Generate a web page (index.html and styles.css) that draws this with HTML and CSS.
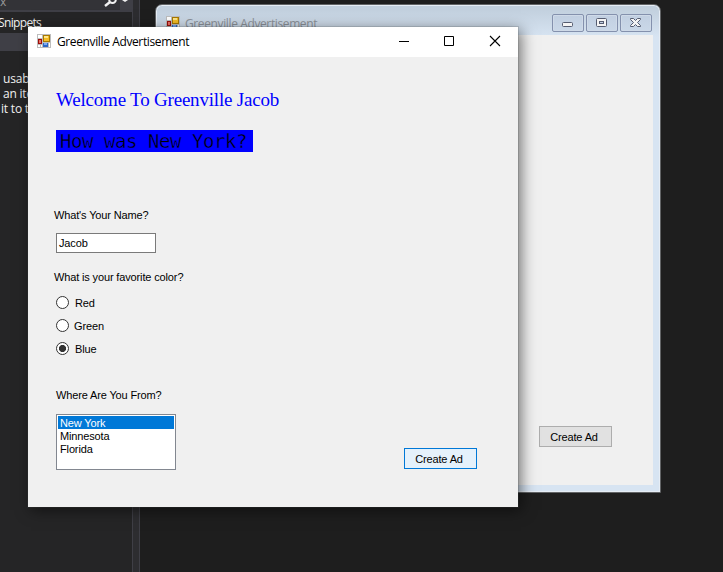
FILE: index.html
```
<!DOCTYPE html>
<html lang="en">
<head>
<meta charset="utf-8">
<title>Greenville Advertisement</title>
<link rel="stylesheet" href="styles.css">
</head>
<body>
<svg class="defs" width="0" height="0">
  <defs>
    <symbol id="form" viewBox="0 0 14 14">
      <path fill="#bdbdbd" d="M0 0h14v14H0z"/>
      <path fill="#fff" d="M1 1h4v3H1zM1 11h2v2H1zM4 11h1v2H4zM12 9h1v4h-1z"/>
      <path fill="#a87900" d="M6 1h7v7H6z"/>
      <path fill="#f5bd25" d="M7 2h5v5H7z"/>
      <path fill="#ffe68a" d="M7 2h4v2H7z"/>
      <path fill="#9c0f0b" d="M1 5h4v5H1z"/>
      <path fill="#ec7064" d="M2 6h2v3H2z"/>
      <path fill="#2e66c4" d="M6 9h5v4H6z"/>
      <path fill="#78aaf2" d="M7 9h3v2H7z"/>
    </symbol>
  </defs>
</svg>
<main class="desktop">
  <aside class="toolbox">
    <div class="search"><span class="query">x</span>
      <svg class="lens" width="24" height="10" viewBox="0 0 24 10"><path d="M1 6L6 2" stroke="#f1f1f1" stroke-width="2.5"/><circle cx="8.500" cy="-.2" r="3.300" fill="none" stroke="#f1f1f1" stroke-width="2"/><path d="M18 0h6l-3 2z" fill="#f1f1f1"/></svg>
    </div>
    <div class="group">Snippets</div>
    <div class="selected"></div>
    <div class="hint"><p>usab</p><p>an ite</p><p class="last">it to t</p></div>
  </aside>
  <div class="splitter"></div>

  <section class="window back">
    <header class="bar">
      <svg class="app" width="14" height="14"><use href="#form"/></svg>
      <h2 class="title">Greenville Advertisement</h2>
      <div class="caption">
        <span class="cap"><svg width="30" height="16" viewBox="0 0 30 16"><rect x="9.500" y="7.500" width="10" height="4" rx="1" fill="#f4f4f4" stroke="#555c70"/></svg></span>
        <span class="cap"><svg width="30" height="16" viewBox="0 0 30 16"><rect x="9.500" y="3.500" width="10" height="8" rx="1" fill="#f4f4f4" stroke="#555c70"/><rect x="12.500" y="6.500" width="4" height="2" fill="#c3d0e2" stroke="#555c70"/></svg></span>
        <span class="cap"><svg width="30" height="16" viewBox="0 0 30 16"><path d="M9.500 3.500h3l2 2 2-2h3v1l-3 3 3 3v1h-3l-2-2-2 2h-3v-1l3-3-3-3z" fill="#f4f4f4" stroke="#555c70"/></svg></span>
      </div>
    </header>
    <div class="client"><button class="create">Create Ad</button></div>
  </section>

  <section class="window front">
    <header class="bar">
      <svg class="app" width="14" height="14"><use href="#form"/></svg>
      <h1 class="title">Greenville Advertisement</h1>
      <svg class="controls" width="102" height="12" viewBox="0 0 102 12" fill="none" stroke="#000"><path d="M0 6.500h10M45.500 1.500h9v9h-9z"/><path d="M91 1l10 10M101 1L91 11" stroke-width="1.100"/></svg>
    </header>
    <form class="client">
      <p class="welcome">Welcome To Greenville Jacob</p>
      <p class="question"><span>How was New York?</span></p>
      <label class="label name">What's Your Name?</label>
      <div class="field">Jacob</div>
      <label class="label color">What is your favorite color?</label>
      <div class="radios">
        <label class="option"><i class="dot"></i><span>Red</span></label>
        <label class="option"><i class="dot"></i><span class="green">Green</span></label>
        <label class="option"><i class="dot on"></i><span>Blue</span></label>
      </div>
      <label class="label from">Where Are You From?</label>
      <div class="bottom">
        <ul class="list"><li class="picked">New York</li><li>Minnesota</li><li>Florida</li></ul>
        <button type="button" class="create focus">Create Ad</button>
      </div>
    </form>
  </section>
</main>
</body>
</html>
```
FILE: styles.css
```
* { box-sizing: border-box; }
body { margin: 0; font: 11px/13px "Liberation Sans", Arial, sans-serif; letter-spacing: -.14px; color: #000; }
p, h1, h2, ul { margin: 0; padding: 0; }
.defs { position: absolute; }
svg { display: block; flex: none; }
.desktop { position: relative; display: flex; width: 723px; height: 572px; overflow: hidden; background: #1e1e1e; }
.toolbox { width: 132px; height: 572px; background: #252526; color: #f1f1f1; font: 12px/15px "Open Sans", "Noto Sans", sans-serif; overflow: hidden; white-space: nowrap; }
.search { display: flex; height: 12px; background: linear-gradient(90deg, #333337 120px, #3f3f46 120px); border-bottom: 2px solid #3f3f46; margin-bottom: 3px; }
.query { flex: none; width: 104px; margin-top: -6px; color: #999; }
.lens { overflow: visible; }
.group { margin-left: -2px; height: 18px; letter-spacing: -.65px; }
.selected { height: 18px; background: #3f3f46; margin-bottom: 20px; }
.hint { padding-left: 3px; letter-spacing: -.2px; }
.last { margin-left: -2px; }
.splitter { width: 8px; border: 1px solid #3f3f46; border-width: 0 1px; background: #2d2d30; }

.window { position: absolute; }
.bar { display: flex; align-items: center; }
.title { font: 12px/16px "Open Sans", "Noto Sans", sans-serif; white-space: nowrap; letter-spacing: -.38px; margin-left: 6px; }
.back { left: 155px; top: 4px; width: 506px; height: 489px; padding: 0 7px 7px; border: 1px solid #626466; border-radius: 7px 7px 0 0; background: linear-gradient(#bfcddb, #d7e4f2 32px); box-shadow: inset 0 0 0 1px #e6edf5; }
.back .bar { height: 30px; padding: 6px 1px 0 3px; }
.back .title { color: #8c9299; margin: 1px 0 0 5px; }
.caption { display: flex; gap: 2px; margin: -1px 0 0 auto; }
.cap { width: 32px; height: 18px; border: 1px solid #8491ad; border-radius: 2px; background: linear-gradient(#c1cfe1, #cad8e8); box-shadow: inset 0 0 0 1px #cfdae8; }
.back .client { height: 450px; background: #f0f0f0; padding: 391px 0 0 376px; }

.front { left: 28px; top: 27px; width: 490px; height: 480px; box-shadow: 0 0 0 1px rgba(70,75,80,.18), 3px 3px 14px rgba(0,0,0,.55); background: #f0f0f0; }
.front .bar { height: 30px; padding: 0 17px 0 9px; background: #fff; }
.front .app { margin-top: -2px; }
.controls { margin: -3px 0 0 auto; }
.front .client { display: flex; flex-direction: column; align-items: flex-start; padding: 32px 0 0 26px; }
.welcome { font: 19px/22px "Liberation Serif", "Times New Roman", serif; letter-spacing: -.2px; color: #00f; margin-left: 2px; white-space: nowrap; }
.question { margin: 19px 0 57px 2px; width: 197px; height: 22px; padding-left: 4px; background: #00f; font: 19px/22px "DejaVu Sans Mono", monospace; letter-spacing: -.44px; -webkit-text-stroke: .35px #00f; white-space: nowrap; }
.label { height: 13px; white-space: nowrap; }
.field { width: 100px; height: 20px; margin: 11px 0 18px 2px; padding: 3px 2px; border: 1px solid #7a7a7a; background: #fff; }
.radios { display: flex; flex-direction: column; gap: 10px; margin: 13px 0 33px 2px; }
.option { display: flex; align-items: center; gap: 6px; height: 13px; }
.dot { width: 13px; height: 13px; margin-top: -2px; border: 1px solid #333; border-radius: 50%; background: #fff; }
.on { background: radial-gradient(circle, #333 3.200px, #fff 3.900px); }
.green { margin-left: -1px; }
.from { margin-left: 2px; }
.bottom { display: flex; margin: 12px 0 0 2px; }
.list { list-style: none; width: 120px; height: 56px; padding: 1px; border: 1px solid #828790; background: #fff; }
.list li { height: 13px; padding-left: 2px; line-height: 15px; }
.picked { background: #0078d7; color: #fff; }
.create { width: 73px; height: 21px; padding: 1px 3px 0 0; border: 1px solid #adadad; background: #e1e1e1; color: #000; font: inherit; letter-spacing: inherit; white-space: nowrap; display: block; }
.focus { margin: 34px 0 0 228px; border-color: #0078d7; background: #e5f1fb; }
```
